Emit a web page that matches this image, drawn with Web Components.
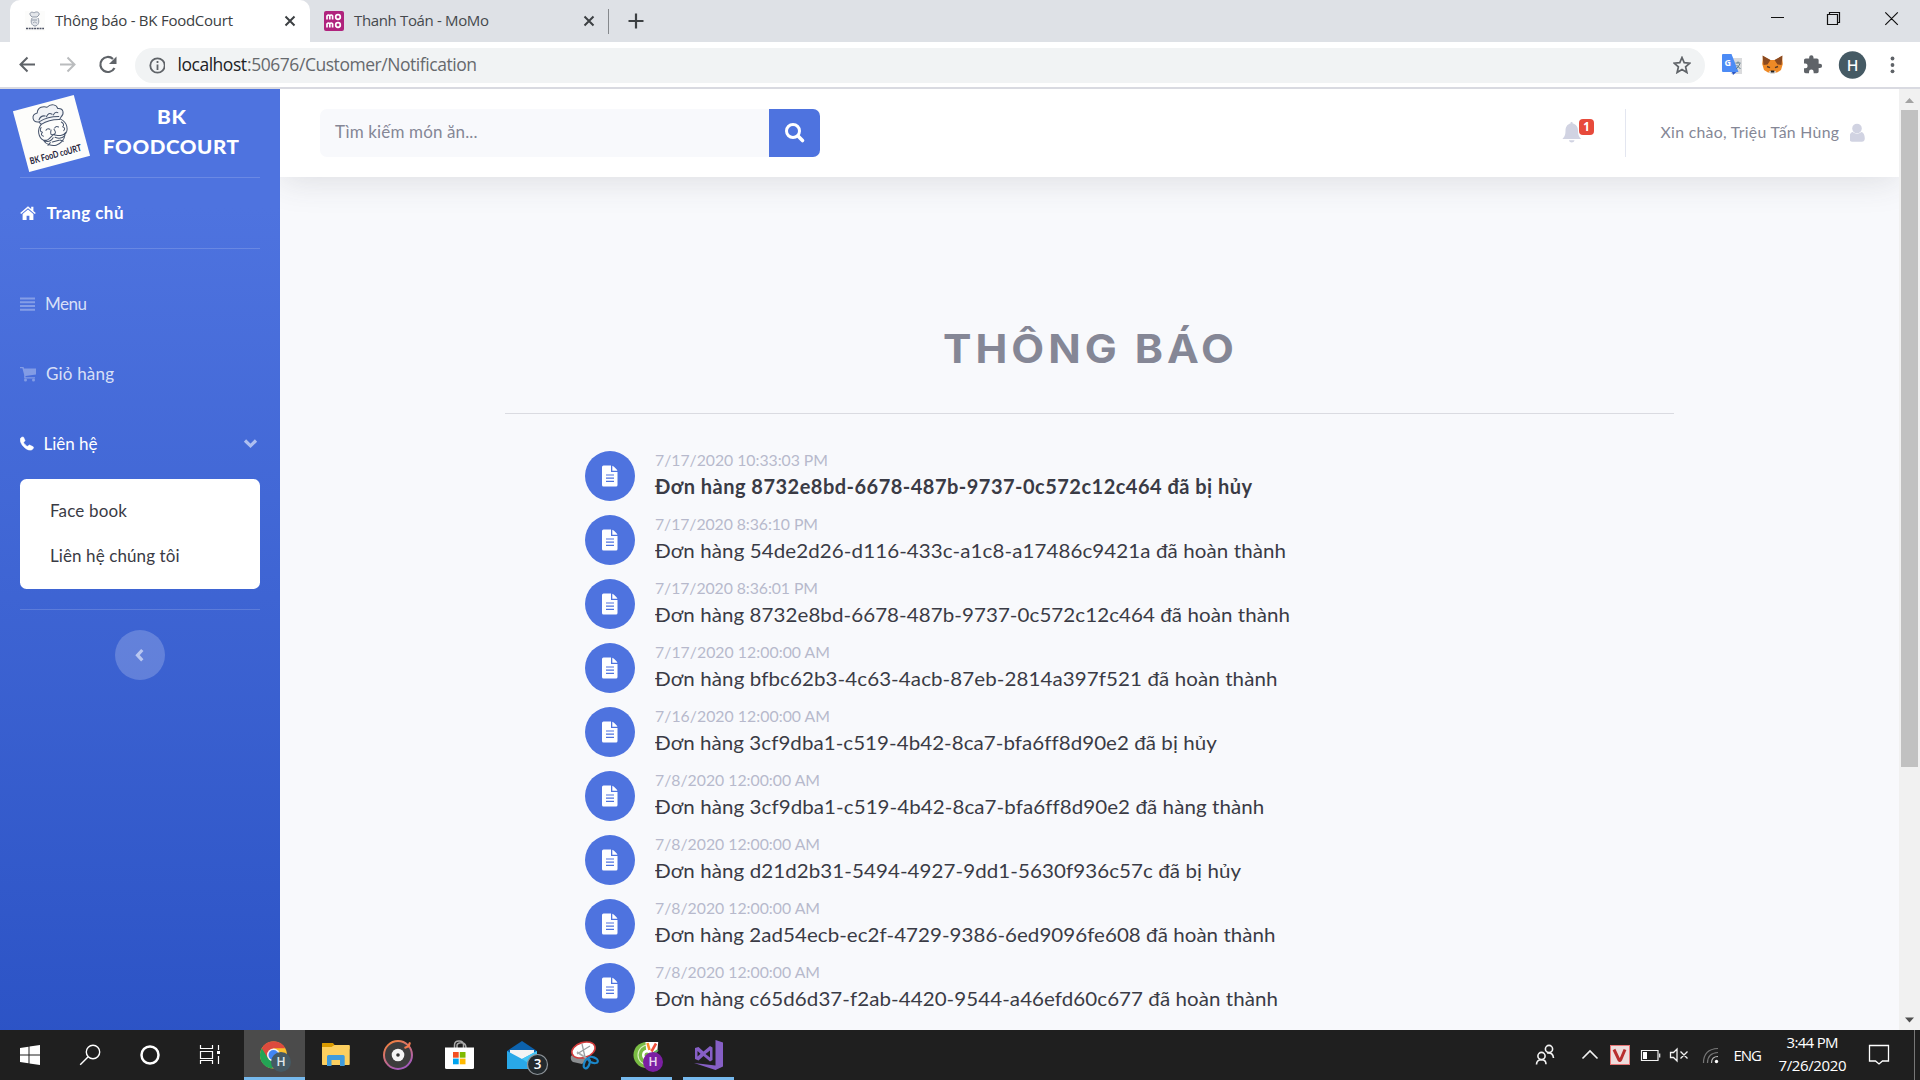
<!DOCTYPE html>
<html lang="vi">
<head>
<meta charset="utf-8">
<title>Thông báo - BK FoodCourt</title>
<style>
  html, body { margin: 0; height: 100%; overflow: hidden; }
  body { font-family: "Open Sans", "Noto Sans", sans-serif; background: #f8f9fc; }
</style>
</head>
<body>
<desktop-screen></desktop-screen>
<script>
const define = (name, html, setup) => customElements.define(name, class extends HTMLElement {
  constructor() {
    super();
    this.attachShadow({ mode: 'open' }).innerHTML = typeof html === 'function' ? '' : html;
  }
  connectedCallback() {
    if (typeof html === 'function') this.shadowRoot.innerHTML = html(this);
    if (setup) setup(this);
  }
});

/* Text tracked to a fixed measure: letter spacing is derived from its natural width. */
define('fit-text', `<style>
  :host { display: inline-block; white-space: pre; }
  span { display: inline-block; transform-origin: 0 50%; }
</style><span></span>`, el => {
  const s = el.shadowRoot.querySelector('span');
  s.textContent = el.getAttribute('text');
  const w = parseFloat(el.getAttribute('w'));
  const k = parseFloat(el.getAttribute('stretch') || '1');
  const n = [...s.textContent].length;
  s.style.letterSpacing = '0px';
  const natural = s.offsetWidth ? s.getBoundingClientRect().width : w;
  s.style.letterSpacing = ((w / k - natural) / (n - 1)) + 'px';
  if (k !== 1) s.style.transform = `scaleX(${k})`;
  el.style.width = w + 'px';
});

/* ---------- Browser window ---------- */
define('browser-tab', el => `<style>
  :host { display: flex; align-items: center; height: 42px; box-sizing: border-box; font-size: 15px; color: #45494d; padding-left: 15px; padding-bottom: 1px; width: 300px; }
  :host([active]) { background: #fff; border-radius: 10px 10px 0 0; color: #3c4043; }
  ::slotted(svg) { width: 20px; height: 20px; flex: none; }
  fit-text { margin: 0 0 2px 10px; }
  .x { margin-left: auto; margin-right: 14px; width: 12px; height: 12px; flex: none; }
</style><slot></slot><fit-text text="${el.getAttribute('label')}" w="${el.getAttribute('w')}"></fit-text>
<svg class="x" viewBox="0 0 12 12"><path d="M1.500 1.500l9 9M10.500 1.500L1.500 10.500" stroke="#3c4043" stroke-width="2" fill="none"/></svg>`);

define('tab-strip', `<style>
  :host { display: flex; height: 42px; background: #dee1e6; padding-left: 10px; align-items: stretch; }
  .sep { width: 1px; height: 25px; background: #85888c; margin: 9px 0 0 -1px; }
  .plus { width: 16px; height: 16px; margin: 13px 0 0 19px; }
  .win { display: flex; margin-left: auto; }
</style>
<browser-tab active label="Thông báo - BK FoodCourt" w="178" style="padding-left:15px">
  <svg viewBox="0 0 20 20"><rect width="20" height="20" fill="#fcfcfb"/><path d="M6 5c-3-3 1-5 3-3 2-2 6-1 5 2l-2 2H7zM7 7c-2 4 0 8 3 8s5-4 3-8M7 9h5M8 12c2-2 3 0 4 0" fill="#e4e7eb" stroke="#8790a0" stroke-width=".9"/><path d="M1 17.500h18" stroke="#4d5264" stroke-width="1.700" stroke-dasharray="2 .7"/></svg>
</browser-tab>
<browser-tab label="Thanh Toán - MoMo" w="135" style="width:299px;padding-left:14px">
  <svg viewBox="0 0 20 20"><rect width="20" height="20" rx="2" fill="#b0237d"/><g fill="none" stroke="#fff" stroke-width="1.700"><path d="M3 8.500V5q1.400-2 2.800 0v3.500M5.800 5q1.400-2 2.800 0v3.500M3 16.500V13q1.400-2 2.800 0v3.500M5.800 13q1.400-2 2.800 0v3.500"/><circle cx="14" cy="6" r="2.300"/><circle cx="14" cy="14" r="2.300"/></g></svg>
</browser-tab>
<span class="sep"></span>
<svg class="plus" viewBox="0 0 16 16"><path d="M8 .5v15M.5 8h15" stroke="#3c4043" stroke-width="2.200"/></svg>
<div class="win">
  <svg width="171" height="42" viewBox="1749 0 171 42" fill="none" stroke="#111" stroke-width="1.200"><path d="M1771 17.500h13M1827.500 14.500h10v10h-10zM1829.500 14v-1.500h10v10h-2M1885.300 12.300l12.500 12.500M1897.800 12.300l-12.500 12.500"/></svg>
</div>`);

define('address-bar', `<style>
  :host { display: flex; height: 45px; background: #fff; border-bottom: 2px solid #d9dae1; align-items: center; }
  .field { display: flex; align-items: center; width: 1570px; height: 35px; border-radius: 18px; background: #f1f3f4; font-size: 17.500px; box-sizing: border-box; margin-top: 1px; color: #66696d; }
  fit-text { margin-bottom: 2px; }
  .host { color: #202124; margin-left: 12.500px; }
  .star { margin-left: auto; margin-right: 14px; }
</style>
<svg width="135" height="45" viewBox="0 42 135 45" fill="none" stroke="#5f6368" stroke-width="2">
  <path d="M35 64.500H21M27.500 57.500l-7 7 7 7"/>
  <path d="M60 64.500h14M67.500 57.500l7 7-7 7" stroke="#babcbe"/>
  <path d="M114.500 68a7.500 7.500 0 1 1-1.500-9" stroke-width="2.200"/><path d="M116.500 56.500v7.500H109z" fill="#5f6368" stroke="none"/>
</svg>
<div class="field">
  <svg width="30" height="35" viewBox="135 47 30 35" fill="none" stroke="#5f6368" stroke-width="1.800"><circle cx="157.500" cy="64.500" r="7.200"/><path d="M157.500 60v2M157.500 63.500v5.500" /></svg>
  <fit-text class="host" text="localhost" w="69.500"></fit-text><fit-text text=":50676/Customer/Notification" w="230"></fit-text>
  <svg class="star" width="18" height="18" viewBox="0 0 18 18"><path d="M9 1.500l2.200 5.200 5.700.5-4.300 3.700 1.300 5.600L9 13.500l-4.900 3 1.300-5.600L1.100 7.200l5.700-.5z" fill="none" stroke="#5f6368" stroke-width="1.700"/></svg>
</div>
<svg width="215" height="45" viewBox="1705 42 215 45">
  <path d="M1728 58h14v16h-11z" fill="#dadbdd"/><path d="M1722 55q0-1 1-1h8.500l7 18H1723q-1 0-1-1z" fill="#4c8bf5"/><path d="M1732 72h4.500l-3.500 3z" fill="#2a56c6"/>
  <path d="M1735.500 63h5M1738 61.500v1.500M1740 63.500q-1.500 4-4 5.500M1736.500 65l4 4" stroke="#607d8b" stroke-width="1" fill="none"/>
  <text x="1724.500" y="66" font-family="Open Sans" font-weight="700" font-size="9" fill="#fff">G</text>
  <path d="M1763 56l7 4h5l7-4 .8 8-1.800 6-4 2.500h-9l-4-2.500-1.800-6z" fill="#ef8a26"/><path d="M1762.500 55.500l8 4.500-3 4.500-4 .5zM1782.500 55.500l-8 4.500 3 4.500 4 .5z" fill="#8b4a20"/><path d="M1767 66.500l3 1.200M1778 66.500l-3 1.200" stroke="#5a3a28" stroke-width="1.400"/><path d="M1769 71h7l-1.500 3h-4z" fill="#ddd"/><path d="M1770.800 70.500h3.500v2h-3.500z" fill="#222"/>
  <g transform="translate(1802.300 54.300) scale(.86)"><path d="M20.500 11H19V7c0-1.100-.9-2-2-2h-4V3.500a2.500 2.500 0 0 0-5 0V5H4c-1.100 0-2 .9-2 2v3.800h1.500a2.700 2.700 0 0 1 0 5.400H2V20c0 1.100.9 2 2 2h3.800v-1.500a2.700 2.700 0 0 1 5.400 0V22H17c1.100 0 2-.9 2-2v-4h1.500a2.500 2.500 0 0 0 0-5z" fill="#5f6368"/></g>
  <circle cx="1852.500" cy="65" r="13.700" fill="#455a64"/><text x="1852.500" y="70.500" text-anchor="middle" font-family="Inter" font-weight="500" font-size="15" fill="#fff">H</text>
  <g fill="#5f6368"><circle cx="1892.500" cy="58.500" r="1.900"/><circle cx="1892.500" cy="65" r="1.900"/><circle cx="1892.500" cy="71.300" r="1.900"/></g>
</svg>`);

define('scroll-bar', `<style>
  :host { display: flex; flex-direction: column; align-items: center; width: 21px; background: #f1f1f1; }
  .thumb { width: 17px; height: 657px; background: #c1c1c1; }
  .down { margin-top: auto; }
</style>
<svg width="21" height="21"><path d="M6 14h9l-4.500-5z" fill="#a3a3a3"/></svg>
<div class="thumb"></div>
<svg class="down" width="21" height="21"><path d="M6 8.500h9l-4.500 5z" fill="#505050"/></svg>`);

/* ---------- Application ---------- */
define('brand-mark', `<style>
  :host { display: flex; height: 88px; box-sizing: border-box; color: #fff; font: 900 19.800px/30px Lato, sans-serif; }
  .logo { margin: 13px 0 0 20px; width: 63px; height: 63px; transform: rotate(-15deg); flex: none; overflow: visible; }
  .name { display: flex; flex-direction: column; align-items: center; width: 136px; margin: 12px 0 0 20px; }
</style>
<svg class="logo" viewBox="0 0 63 63">
  <rect width="63" height="63" fill="#fdfdfb"/>
  <g transform="translate(2 0)" fill="none" stroke="#45536b" stroke-width="1" stroke-linecap="round" stroke-linejoin="round">
    <path d="M20 17c-6-1-6-9 1-9 2-6 8-5 11-3 5-3 10 0 10 4 6 1 5 7 1 9l-2 2c-7-2-13-2-19 0zM21 15q3-4 7-2M29 14q3-4 6-1M36 14q3-3 5-1M21 17q9-3 20 0" fill="#f1f3f6"/>
    <path d="M22 20c-6 4-6 12-2 16 1 5 7 8 11 8s10-3 11-8c5-3 6-11 0-16M21 23q-3 3 0 5-3 2 0 4M42 23q3 3 0 5 3 2 0 4M25 27q2-2 4 0M34 27q2-2 4 0M30 28q-3 5 1 5 4 0 2-5M19 35c5 4 8 0 12-2 4 2 8 5 13 1M21 37q5 3 9-1M32 36q5 4 10 1M28 40h7M23 42l3-2M39 42l-3-2"/>
  </g>
  <text x="3.500" y="56" textLength="53" lengthAdjust="spacingAndGlyphs" font-family="Lato" font-weight="700" font-size="9.500" fill="#1e2238">BK FooD coURT</text>
</svg>
<div class="name"><fit-text text="BK" w="29" stretch="1.05"></fit-text><fit-text text="FOODCOURT" w="136" stretch="1.04"></fit-text></div>`);

define('nav-item', el => `<style>
  :host { display: flex; align-items: center; height: 70px; padding: 0 20px; font: 17px Lato, sans-serif; color: rgba(255,255,255,.8); box-sizing: border-box; }
  :host([strong]) { color: #fff; font-weight: 700; }
  :host([open]) { color: #fff; }
  ::slotted(svg) { flex: none; }
  fit-text { margin-bottom: 2px; }
  .chev { margin-left: auto; margin-right: 2px; }
</style><slot></slot><fit-text text="${el.getAttribute('label')}" w="${el.getAttribute('w')}"></fit-text>
${el.hasAttribute('open') ? '<svg class="chev" width="15" height="10" viewBox="0 0 15 10"><path d="M2 1.500l5.500 5.300L13 1.500" fill="none" stroke="#aebff0" stroke-width="3.200"/></svg>' : ''}`);

define('sub-menu', `<style>
  :host { display: flex; flex-direction: column; margin: 0 20px; height: 110px; box-sizing: border-box; padding: 9px 30px; background: #fff; border-radius: 6.500px; font: 17px Lato, sans-serif; color: #3a3b45; }
  fit-text { line-height: 45px; }
</style><fit-text text="Face book" w="77"></fit-text><fit-text text="Liên hệ chúng tôi" w="129.500"></fit-text>`);

define('side-bar', `<style>
  :host { display: flex; flex-direction: column; width: 280px; background: linear-gradient(180deg, #4e73df 119px, #224abe 1187px); }
  hr { border: 0; height: 1px; margin: 0 20px; background: rgba(255,255,255,.16); flex: none; }
  .toggle { align-self: center; width: 50px; height: 50px; border-radius: 50%; background: rgba(255,255,255,.2); margin-top: 20px; display: flex; align-items: center; justify-content: center; }
</style>
<brand-mark></brand-mark><hr>
<nav-item strong label="Trang chủ" w="77"><svg width="26.500" height="18" viewBox="0 0 26.500 18" fill="#fff"><path d="M8 2.300L.2 9l1 1.100L8 4.300l6.800 5.800 1-1.100-2.400-2V2.700h-2.200v2.400zM8 5.500L2.600 10v6H6.600v-4.200h2.800V16h4V10z"/></svg></nav-item>
<hr style="margin-bottom:20px">
<nav-item label="Menu" w="42"><svg width="25" height="16" viewBox="0 0 25 16" fill="#fff" opacity=".32"><path d="M0 1.500h15V3.500H0zM0 5.200h15v2H0zM0 9h15v2H0zM0 12.700h15v2H0z"/></svg></nav-item>
<nav-item label="Giỏ hàng" w="68"><svg width="26" height="16" viewBox="0 0 26 16" fill="#fff" opacity=".32"><path d="M0 1h3.500l.6 1.500H16v6L5.500 10v1.300H15v1.300H4.200V9L2.400 2.300H0z"/><circle cx="5.500" cy="14" r="1.500"/><circle cx="13.500" cy="14" r="1.500"/></svg></nav-item>
<nav-item open label="Liên hệ" w="54"><svg width="23.500" height="16" viewBox="0 0 23.500 16" fill="#fff"><path d="M.2 3.200C.3 2 1.500 1 3 1l.5.200L5 4.400c.2.800-1.400 1.500-1.400 2 0 1 3 3.900 4 3.900.5 0 1.200-1.500 2-1.300l3.600 1.800.3.600c-.2 1.600-1.700 2.700-3.200 2.700C5.800 14.100.1 8.300.2 3.200z" stroke="#fff" stroke-width=".6"/></svg></nav-item>
<sub-menu></sub-menu>
<hr style="margin-top:20px">
<div class="toggle"><svg width="10" height="15" viewBox="0 0 10 15"><path d="M7.300 2L2.500 7.200l4.800 5.200" fill="none" stroke="#b9c7f1" stroke-width="3.200"/></svg></div>`);

define('top-bar', `<style>
  :host { display: flex; align-items: center; height: 88px; background: #fff; box-shadow: 0 3px 35px rgba(58,59,69,.15); color: #858796; box-sizing: border-box; padding-left: 40px; font-family: Lato, sans-serif; }
  .search { width: 449px; height: 48px; background: #f8f9fc; border-radius: 7px 0 0 7px; display: flex; align-items: center; padding: 0 0 3px 15px; box-sizing: border-box; font-size: 17px; }
  .go { width: 51px; height: 48px; background: #4e73df; border-radius: 0 7px 7px 0; }
  .bell { margin-left: auto; }
  .rule { width: 1px; height: 48px; background: #e3e6f0; margin-right: 35px; }
  .hi { font-size: 15.800px; margin: 0 11px 3px 0; }
</style>
<div class="search"><fit-text text="Tìm kiếm món ăn..." w="142.500"></fit-text></div>
<div class="go"><svg width="51" height="48" viewBox="769 109 51 48"><circle cx="793" cy="131" r="6.500" fill="none" stroke="#fff" stroke-width="3"/><path d="M798 136l4.500 4.500" stroke="#fff" stroke-width="3.600" stroke-linecap="round"/></svg></div>
<svg class="bell" width="65" height="48" viewBox="1560 109 65 48">
  <path d="M1571.500 122c1 0 1.300.7 1.200 1.500 3.500.7 5.300 3.500 5.300 7 0 4.500 1 6 3 8.500h-18.500c2-2.500 3-4 3-8.500 0-3.500 1.800-6.300 5-7-.1-.8.200-1.500 1-1.500zM1569 140.300h5.500c-.5 3-5 3-5.500 0z" fill="#d1d3e2"/>
  <rect x="1579" y="119" width="15" height="16" rx="4" fill="#e74a3b"/><text x="1586.600" y="130.800" text-anchor="middle" font-family="Open Sans" font-weight="700" font-size="11.500" fill="#fff">1</text>
</svg>
<span class="rule"></span>
<fit-text class="hi" text="Xin chào, Triệu Tấn Hùng" w="178.500"></fit-text>
<svg width="49" height="48" viewBox="1850 109 49 48" fill="#d1d3e2"><circle cx="1857" cy="128.500" r="4.800"/><path d="M1852.800 132c2.500 2.300 6 2.300 8.500 0 2.500.5 3.500 3.500 3.500 6.500 0 2-1.200 3.300-3 3.300h-9.600c-1.800 0-3-1.300-3-3.300 0-3 1.100-6 3.600-6.500z"/></svg>`);

define('notice-item', el => `<style>
  :host { display: flex; height: 64px; align-items: flex-start; font-family: Lato, sans-serif; }
  .dot { width: 50px; height: 50px; border-radius: 50%; background: #4e73df; margin-right: 20px; display: flex; align-items: center; justify-content: center; flex: none; }
  .body { display: flex; flex-direction: column; align-items: flex-start; margin-top: -1px; }
  .date { font-size: 15.800px; line-height: 20px; color: #b7b9cc; }
  .msg { font-size: 20px; line-height: 30px; color: #3a3b45; margin-top: 1px; }
  :host([unread]) .msg { font-weight: 700; }
</style>
<div class="dot"><svg width="16" height="22" viewBox="0 0 16 22"><path d="M1.500.5H9v6.500h6.500v13q0 1.500-1.500 1.500H1.500Q0 21.500 0 20V2Q0 .5 1.500.5z" fill="#fff"/><path d="M10.300.8q1 .3 1.700 1l2.500 2.500q.7.600.9 1.500h-5.100z" fill="#fff"/><path d="M4 10h8M4 13.200h8M4 16.400h8" stroke="#4e73df" stroke-width="1.200"/></svg></div>
<div class="body"><fit-text class="date" text="${el.getAttribute('date')}" w="${el.getAttribute('dw')}"></fit-text>
<fit-text class="msg" stretch="${el.hasAttribute('unread') ? 1 : 1.025}" text="${el.getAttribute('msg')}" w="${el.getAttribute('mw')}"></fit-text></div>`);

define('notice-list', `<style>
  :host { display: flex; flex-direction: column; margin: 0 225px; }
  h1 { margin: 142px 3px 0 0; align-self: center; font: 700 39.500px/60px Inter, sans-serif; color: #858796; height: 60px; }
  hr { border: 0; height: 1px; width: 100%; background: #dadbe1; margin: 34px 0 37px; }
  .items { padding-left: 80px; }
</style>
<h1><fit-text text="THÔNG BÁO" w="291" stretch="1.08"></fit-text></h1><hr><div class="items"></div>`, el => {
  const rows = [
    ['7/17/2020 10:33:03 PM', 173, 'Đơn hàng 8732e8bd-6678-487b-9737-0c572c12c464 đã bị hủy', 597],
    ['7/17/2020 8:36:10 PM', 163, 'Đơn hàng 54de2d26-d116-433c-a1c8-a17486c9421a đã hoàn thành', 631],
    ['7/17/2020 8:36:01 PM', 163, 'Đơn hàng 8732e8bd-6678-487b-9737-0c572c12c464 đã hoàn thành', 635],
    ['7/17/2020 12:00:00 AM', 175, 'Đơn hàng bfbc62b3-4c63-4acb-87eb-2814a397f521 đã hoàn thành', 622.5],
    ['7/16/2020 12:00:00 AM', 175, 'Đơn hàng 3cf9dba1-c519-4b42-8ca7-bfa6ff8d90e2 đã bị hủy', 561],
    ['7/8/2020 12:00:00 AM', 165, 'Đơn hàng 3cf9dba1-c519-4b42-8ca7-bfa6ff8d90e2 đã hàng thành', 608.5],
    ['7/8/2020 12:00:00 AM', 165, 'Đơn hàng d21d2b31-5494-4927-9dd1-5630f936c57c đã bị hủy', 586],
    ['7/8/2020 12:00:00 AM', 165, 'Đơn hàng 2ad54ecb-ec2f-4729-9386-6ed9096fe608 đã hoàn thành', 620.5],
    ['7/8/2020 12:00:00 AM', 165, 'Đơn hàng c65d6d37-f2ab-4420-9544-a46efd60c677 đã hoàn thành', 623]
  ];
  el.shadowRoot.querySelector('.items').innerHTML = rows.map((r, i) =>
    `<notice-item ${i ? '' : 'unread'} date="${r[0]}" dw="${r[1]}" msg="${r[2]}" mw="${r[3]}"></notice-item>`).join('');
});

/* ---------- Windows taskbar ---------- */
define('task-button', `<style>
  :host { display: flex; height: 50px; width: 62px; box-sizing: border-box; justify-content: center; }
  :host([wide]) { width: 60px; }
  :host([running]) { background: linear-gradient(#76b9ed, #76b9ed) center bottom / 51px 3px no-repeat; }
  :host([focused]) { background: linear-gradient(#76b9ed, #76b9ed) center bottom / 100% 3px no-repeat #4b4b4b; width: 61px; margin: 0 0 0 1px; }
</style><slot></slot>`);

define('task-bar', `<style>
  :host { display: flex; height: 50px; background: #1f1f1f; color: #fff; justify-content: space-between; }
  .left { display: flex; }
  .right { display: flex; align-items: center; font-size: 15px; }
  .clock { display: flex; flex-direction: column; align-items: center; line-height: 23px; width: 67px; margin: 0 0 2px 17px; }
  svg { flex: none; }
</style>
<div class="left">
<task-button wide><svg width="60" height="50" viewBox="0 1030 60 50" fill="#fff"><path d="M20 1048l8.500-1.300v7.800H20zM29.500 1046.500l10.500-1.500v9.500h-10.500zM20 1055.500h8.500v7.800L20 1062zM29.500 1055.500H40v9.500l-10.500-1.500z"/></svg></task-button>
<task-button wide><svg width="60" height="50" viewBox="60 1030 60 50" fill="none" stroke="#fff" stroke-width="1.400"><circle cx="93" cy="1052" r="6.700"/><path d="M88.200 1056.800l-8 8"/></svg></task-button>
<task-button wide><svg width="60" height="50" viewBox="120 1030 60 50"><circle cx="150" cy="1055" r="8.500" fill="none" stroke="#fff" stroke-width="2.500"/></svg></task-button>
<task-button wide style="width:63px"><svg width="63" height="50" viewBox="180 1030 63 50" fill="none" stroke="#fff" stroke-width="1.200"><path d="M200.500 1045v3.500h12v-3.500M200.500 1051.500h12v7h-12zM200.500 1064v-3.500h12v3.500M218.500 1045v5M218.500 1056v8"/><path d="M217 1051h3v3h-3z" fill="#fff" stroke="none"/></svg></task-button>
<task-button focused><svg width="61" height="50" viewBox="244 1030 61 50">
  <circle cx="273.500" cy="1055" r="13.500" fill="#fbc02d"/><path d="M273.500 1055L261.800 1048.200A13.500 13.500 0 0 0 272 1068.500l7-10z" fill="#23a455"/><path d="M261.800 1048.200a13.500 13.500 0 0 1 23.600 0h-11.900l-5.500 10z" fill="#dd4b3e"/><circle cx="273.500" cy="1055" r="6.500" fill="#f3f3f3"/><circle cx="273.500" cy="1055" r="5" fill="#4285f4"/>
  <circle cx="281" cy="1062" r="10" fill="#455a64"/><text x="281" y="1066.400" text-anchor="middle" font-family="Inter" font-weight="600" font-size="11.500" fill="#dfe5e8">H</text></svg></task-button>
<task-button><svg width="62" height="50" viewBox="305 1030 62 50"><path d="M322 1043.500q0-.5.500-.5H333l2 2.500h14q.7 0 .7.700v3H322z" fill="#d99a00"/><path d="M322 1047h9.500l3-2h14.500q.7 0 .7.700v18.600q0 .7-.7.700h-26.300q-.7 0-.7-.7z" fill="#fccf5f"/><path d="M327 1066v-9.500q0-1.500 1.500-1.500h14.700q1.500 0 1.500 1.500v9.500H340v-6h-8.500v6z" fill="#3f9bdc"/></svg></task-button>
<task-button><svg width="62" height="50" viewBox="367 1030 62 50"><defs><linearGradient id="gr" x1="0" y1="0" x2=".5" y2="1"><stop offset="0" stop-color="#fa8534"/><stop offset="1" stop-color="#a45bb8"/></linearGradient></defs><circle cx="398" cy="1055" r="14" fill="#3d3d3d" stroke="url(#gr)" stroke-width="2"/><path d="M404.500 1048l3.500-1.500 2-4-1.500 5" stroke="#f27a4c" stroke-width="2" fill="none"/><circle cx="398" cy="1055" r="6.300" fill="#f5f5f5"/><circle cx="398" cy="1055" r="1.800" fill="#333"/></svg></task-button>
<task-button><svg width="62" height="50" viewBox="429 1030 62 50"><path d="M454.500 1048v-3q0-4 4.500-4t4.500 4v3M457 1048v-3q1-3 6-2 3 1 3 5" fill="none" stroke="#aaa" stroke-width="1.500"/><path d="M445 1047.500h29v20q0 1.500-1.500 1.500h-26q-1.500 0-1.500-1.500z" fill="#fff"/><path d="M453 1052h5.700v5.700H453z" fill="#f25022"/><path d="M459.800 1052h5.700v5.700h-5.700z" fill="#7fba00"/><path d="M453 1058.600h5.700v5.700H453z" fill="#00a4ef"/><path d="M459.800 1058.600h5.700v5.700h-5.700z" fill="#ffb900"/></svg></task-button>
<task-button><svg width="62" height="50" viewBox="491 1030 62 50"><path d="M507 1051l15-10 15 10v3h-30z" fill="#0c62ad"/><path d="M510 1050h24v10h-24z" fill="#f4f4f4"/><path d="M507 1051l15 8 15-8v18h-30z" fill="#29a8e8"/><path d="M522 1059l15-8v18z" fill="#44c6f5"/><circle cx="537.500" cy="1064.500" r="10" fill="#232a2e" stroke="#8d9499" stroke-width="1.200"/><text x="537.500" y="1069.300" text-anchor="middle" font-family="Open Sans" font-weight="600" font-size="13.500" fill="#fff">3</text></svg></task-button>
<task-button><svg width="62" height="50" viewBox="553 1030 62 50"><path d="M571 1056l4-3 13 6-6 5-9-2q-3-2-2-6z" fill="#8b8e90"/><ellipse cx="583.500" cy="1050" rx="12" ry="7.500" fill="#fff" stroke="#d13b3b" stroke-width="1.600" transform="rotate(-18 583.500 1050)"/><path d="M577 1054l13-8M582 1044l3 13" stroke="#9a9da0" stroke-width="1.300"/><path d="M577 1052l12 8" stroke="#a9abad" stroke-width="1.800"/><g fill="none" stroke="#1b87c9" stroke-width="2.200"><ellipse cx="587" cy="1063.500" rx="2.600" ry="5" transform="rotate(20 587 1063)"/><ellipse cx="593" cy="1060" rx="5" ry="2.800" transform="rotate(18 593 1060)"/></g></svg></task-button>
<task-button running><svg width="62" height="50" viewBox="615 1030 62 50"><path d="M650 1042.500a13 13 0 1 0 0 25l2-8-5-4z" fill="#79bc43"/><path d="M648 1045a10 10 0 1 0 0 20" stroke="#d7edbd" stroke-width="1.200" fill="none"/><circle cx="647.500" cy="1055" r="5.500" fill="#fff"/><path d="M645.500 1042h12.700l-1 10-8 4-3-5z" fill="#fff"/><circle cx="647" cy="1055" r="2.500" fill="#79bc43"/><path d="M647.500 1043l2 7" stroke="#fa8b2a" stroke-width="2.600"/><path d="M656 1043.500l-4.500 8" stroke="#ee4d3a" stroke-width="2.600"/><path d="M658 1050l-6 4" stroke="#59b357" stroke-width="2"/><circle cx="653" cy="1062" r="10" fill="#7b1fa2"/><text x="653" y="1066.200" text-anchor="middle" font-family="Inter" font-weight="600" font-size="11.500" fill="#e9d6f0">H</text></svg></task-button>
<task-button running><svg width="62" height="50" viewBox="677 1030 62 50" fill="#865fc5"><path d="M715.500 1040l7.500 2.500v24l-7.500 3.500-21.500-7 21.500 2.500z"/><path d="M695 1048l3.500-1 5 4.500 6.500-5.500 2.500 1.500v12.500l-2.500 1.500-6.500-5.500-5 4.500-3.500-1.500zm2.500 3v5.500l3-2.700zm12.500-.5l-4.500 3.500 4.500 3.500z" fill-rule="evenodd"/></svg></task-button>
</div>
<div class="right">
<svg width="214" height="50" viewBox="1520 1030 214 50" fill="none" stroke="#f2f2f2" stroke-width="1.600">
  <circle cx="1541.500" cy="1056" r="3.600"/><path d="M1536.500 1064.500q0-4.800 5-4.800 4.500 0 4.500 4.500"/><circle cx="1549" cy="1049" r="3.600"/><path d="M1547 1053q6-1 6.500 5"/>
  <path d="M1582.500 1058.500l7.500-7.500 7.500 7.500"/>
  <rect x="1610.500" y="1045.500" width="19" height="19" fill="#eedcdc" stroke="#e77575" stroke-width="1"/><path d="M1614 1049.500l5 10.500q1 1.500 2-1l4-9.500" stroke="#b82d2d" stroke-width="3"/>
  <path d="M1641.500 1050.500h16.500v10h-16.500zM1659.700 1053.500v4" stroke-width="1.200"/><path d="M1643 1052h4v7h-4z" fill="#fff" stroke="none"/>
  <path d="M1670.500 1052.500h3l3.500-3.500v12l-3.500-3.500h-3zM1680.500 1051.500l7 7M1687.500 1051.500l-7 7" stroke-width="1.300"/>
  <g stroke="#777" stroke-width="1.200"><path d="M1703.500 1063q0-14 14.500-14.500"/><path d="M1707.500 1063q0-10 10.500-10.500"/></g><path d="M1711.500 1063q0-6.500 6.500-6.500" stroke="#bbb" stroke-width="1.200"/><circle cx="1716.500" cy="1061.500" r="1.700" fill="#fff" stroke="none"/>
</svg>
<fit-text text="ENG" w="28.500"></fit-text>
<div class="clock"><fit-text text="3:44 PM" w="52"></fit-text><fit-text text="7/26/2020" w="68"></fit-text></div>
<svg width="74" height="50" viewBox="1846 1030 74 50" fill="none" stroke="#fff" stroke-width="1.300"><path d="M1869.500 1045.500h19v15.500h-6l-3.500 3-3.500-3h-6z"/><path d="M1914.500 1030v50" stroke="#777" stroke-width="1"/></svg>
</div>`);

define('desktop-screen', `<style>
  :host { display: flex; flex-direction: column; height: 1080px; width: 1920px; overflow: hidden; }
  tab-strip, address-bar, task-bar { flex: none; }
  .view { display: flex; flex: 1; min-height: 0; overflow: hidden; }
  side-bar, scroll-bar { flex: none; }
  main { flex: 1; min-width: 0; overflow: hidden; background: #f8f9fc; }
</style>
<tab-strip></tab-strip><address-bar></address-bar>
<div class="view"><side-bar></side-bar><main><top-bar></top-bar><notice-list></notice-list></main><scroll-bar></scroll-bar></div>
<task-bar></task-bar>`);
</script>
</body>
</html>
